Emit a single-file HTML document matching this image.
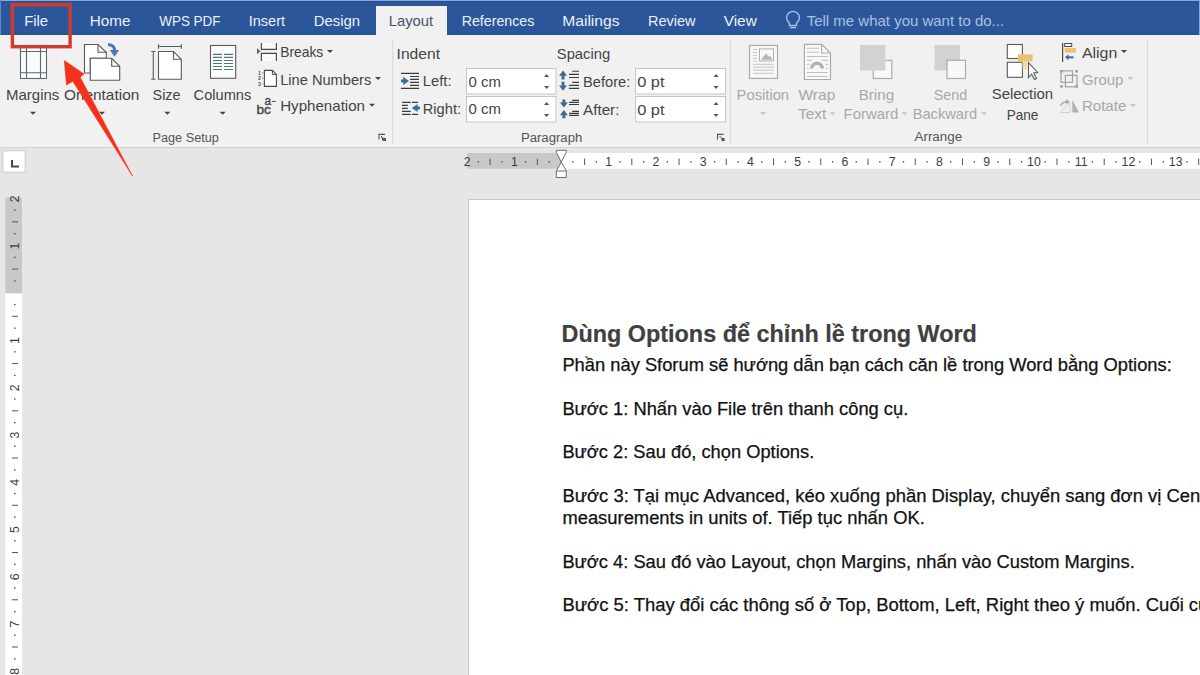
<!DOCTYPE html>
<html><head><meta charset="utf-8"><title>Word Layout</title>
<style>
html,body{margin:0;padding:0;width:1200px;height:675px;overflow:hidden;background:#e6e6e6;}
svg{display:block;font-family:"Liberation Sans",sans-serif;}
</style></head><body>
<svg width="1200" height="675" viewBox="0 0 1200 675">
<rect x="0" y="0" width="1200" height="675" fill="#e6e6e6"/>
<rect x="0" y="0" width="1200" height="35" fill="#2b579a"/>
<rect x="0" y="0" width="1200" height="1.2" fill="#85a8dc"/>
<rect x="0" y="1.2" width="1200" height="1" fill="#274f8f"/>
<rect x="0" y="34" width="1200" height="1" fill="#27508f"/>
<rect x="1199" y="0" width="1" height="35" fill="#85a8dc"/>
<rect x="0" y="0" width="1" height="35" fill="#5f86c4"/>
<rect x="0" y="35" width="1200" height="112" fill="#f1f1f1"/>
<rect x="0" y="147" width="1200" height="1" fill="#d4d4d4"/>
<rect x="376" y="6" width="71" height="30" fill="#f1f1f1"/>
<text x="24.20" y="26.20" font-size="14.8" fill="#e9f0f9" textLength="23.90" lengthAdjust="spacingAndGlyphs">File</text>
<text x="89.70" y="26.20" font-size="14.8" fill="#e9f0f9" textLength="40.88" lengthAdjust="spacingAndGlyphs">Home</text>
<text x="159.20" y="26.20" font-size="14.8" fill="#e9f0f9" textLength="61.38" lengthAdjust="spacingAndGlyphs">WPS PDF</text>
<text x="248.70" y="26.20" font-size="14.8" fill="#e9f0f9" textLength="36.41" lengthAdjust="spacingAndGlyphs">Insert</text>
<text x="313.70" y="26.20" font-size="14.8" fill="#e9f0f9" textLength="46.42" lengthAdjust="spacingAndGlyphs">Design</text>
<text x="461.70" y="26.20" font-size="14.8" fill="#e9f0f9" textLength="72.64" lengthAdjust="spacingAndGlyphs">References</text>
<text x="562.20" y="26.20" font-size="14.8" fill="#e9f0f9" textLength="57.39" lengthAdjust="spacingAndGlyphs">Mailings</text>
<text x="647.95" y="26.20" font-size="14.8" fill="#e9f0f9" textLength="47.58" lengthAdjust="spacingAndGlyphs">Review</text>
<text x="723.70" y="26.20" font-size="14.8" fill="#e9f0f9" textLength="33.11" lengthAdjust="spacingAndGlyphs">View</text>
<text x="388.70" y="26.20" font-size="14.8" fill="#46546a" textLength="44.39" lengthAdjust="spacingAndGlyphs">Layout</text>
<g fill="none" stroke="#a9c0e4" stroke-width="1.4"><path d="M789.5 23.5 C787.5 21.5 786.6 19.8 786.6 17.8 A6.4 6.4 0 0 1 799.4 17.8 C799.4 19.8 798.5 21.5 796.5 23.5 L796.5 25.5 L789.5 25.5 Z"/><path d="M790 27.6 H796"/></g>
<text x="806.70" y="26.20" font-size="14.8" fill="#a9c0e4" textLength="197.42" lengthAdjust="spacingAndGlyphs">Tell me what you want to do...</text>
<text x="6.00" y="99.60" font-size="14.8" fill="#444444" textLength="53.29" lengthAdjust="spacingAndGlyphs">Margins</text>
<text x="63.90" y="99.60" font-size="14.8" fill="#444444" textLength="75.40" lengthAdjust="spacingAndGlyphs">Orientation</text>
<text x="152.50" y="99.60" font-size="14.8" fill="#444444" textLength="28.09" lengthAdjust="spacingAndGlyphs">Size</text>
<text x="193.60" y="99.60" font-size="14.8" fill="#444444" textLength="57.70" lengthAdjust="spacingAndGlyphs">Columns</text>
<path d="M30.00 111.80 H36.00 L33.00 114.80 Z" fill="#444444"/>
<path d="M99.00 111.80 H105.00 L102.00 114.80 Z" fill="#444444"/>
<path d="M164.30 111.80 H170.30 L167.30 114.80 Z" fill="#444444"/>
<path d="M219.70 111.80 H225.70 L222.70 114.80 Z" fill="#444444"/>
<text x="280.20" y="57.30" font-size="14.8" fill="#444444" textLength="43.11" lengthAdjust="spacingAndGlyphs">Breaks</text>
<text x="280.20" y="84.70" font-size="14.8" fill="#444444" textLength="91.08" lengthAdjust="spacingAndGlyphs">Line Numbers</text>
<text x="280.20" y="111.30" font-size="14.8" fill="#444444" textLength="84.81" lengthAdjust="spacingAndGlyphs">Hyphenation</text>
<path d="M327.00 50.00 H333.00 L330.00 53.00 Z" fill="#444444"/>
<path d="M375.00 77.00 H381.00 L378.00 80.00 Z" fill="#444444"/>
<path d="M369.00 103.70 H375.00 L372.00 106.70 Z" fill="#444444"/>
<text x="152.50" y="141.70" font-size="12.5" fill="#555555" textLength="66.38" lengthAdjust="spacingAndGlyphs">Page Setup</text>
<rect x="392.2" y="40" width="1" height="104" fill="#d8d8d8"/>
<rect x="729.9" y="40" width="1" height="104" fill="#d8d8d8"/>
<rect x="1146.8" y="40" width="1" height="104" fill="#d8d8d8"/>
<text x="396.60" y="58.70" font-size="14.8" fill="#444444" textLength="43.40" lengthAdjust="spacingAndGlyphs">Indent</text>
<text x="556.80" y="58.50" font-size="14.8" fill="#444444" textLength="53.39" lengthAdjust="spacingAndGlyphs">Spacing</text>
<text x="422.80" y="86.30" font-size="14.8" fill="#444444" textLength="28.70" lengthAdjust="spacingAndGlyphs">Left:</text>
<text x="422.80" y="113.90" font-size="14.8" fill="#444444" textLength="38.21" lengthAdjust="spacingAndGlyphs">Right:</text>
<text x="583.00" y="86.70" font-size="14.8" fill="#444444" textLength="47.32" lengthAdjust="spacingAndGlyphs">Before:</text>
<text x="583.00" y="114.50" font-size="14.8" fill="#444444" textLength="36.42" lengthAdjust="spacingAndGlyphs">After:</text>
<rect x="466.5" y="68.5" width="89.5" height="25.5" fill="#ffffff" stroke="#c6c6c6" stroke-width="1"/>
<rect x="466.5" y="96.5" width="89.5" height="25.5" fill="#ffffff" stroke="#c6c6c6" stroke-width="1"/>
<rect x="635.5" y="68.5" width="90" height="25.5" fill="#ffffff" stroke="#c6c6c6" stroke-width="1"/>
<rect x="635.5" y="96.5" width="90" height="25.5" fill="#ffffff" stroke="#c6c6c6" stroke-width="1"/>
<text x="468.50" y="86.50" font-size="14.8" fill="#444444" textLength="32.42" lengthAdjust="spacingAndGlyphs">0 cm</text>
<text x="468.50" y="114.00" font-size="14.8" fill="#444444" textLength="32.42" lengthAdjust="spacingAndGlyphs">0 cm</text>
<text x="637.20" y="86.70" font-size="14.8" fill="#444444" textLength="27.38" lengthAdjust="spacingAndGlyphs">0 pt</text>
<text x="637.20" y="114.50" font-size="14.8" fill="#444444" textLength="27.38" lengthAdjust="spacingAndGlyphs">0 pt</text>
<text x="520.90" y="141.50" font-size="12.5" fill="#555555" textLength="61.42" lengthAdjust="spacingAndGlyphs">Paragraph</text>
<text x="736.60" y="99.50" font-size="14.8" fill="#a8a8a8" textLength="52.50" lengthAdjust="spacingAndGlyphs">Position</text>
<text x="798.50" y="99.50" font-size="14.8" fill="#a8a8a8" textLength="36.79" lengthAdjust="spacingAndGlyphs">Wrap</text>
<text x="797.90" y="119.30" font-size="14.8" fill="#a8a8a8" textLength="28.39" lengthAdjust="spacingAndGlyphs">Text</text>
<text x="858.70" y="99.50" font-size="14.8" fill="#a8a8a8" textLength="35.40" lengthAdjust="spacingAndGlyphs">Bring</text>
<text x="843.60" y="119.30" font-size="14.8" fill="#a8a8a8" textLength="54.78" lengthAdjust="spacingAndGlyphs">Forward</text>
<text x="933.70" y="99.50" font-size="14.8" fill="#a8a8a8" textLength="33.42" lengthAdjust="spacingAndGlyphs">Send</text>
<text x="912.70" y="119.30" font-size="14.8" fill="#a8a8a8" textLength="64.38" lengthAdjust="spacingAndGlyphs">Backward</text>
<path d="M760.00 112.00 H766.00 L763.00 115.00 Z" fill="#c4c4c4"/>
<path d="M829.50 112.20 H835.50 L832.50 115.20 Z" fill="#c4c4c4"/>
<path d="M901.50 112.20 H907.50 L904.50 115.20 Z" fill="#c4c4c4"/>
<path d="M981.00 112.20 H987.00 L984.00 115.20 Z" fill="#c4c4c4"/>
<text x="914.50" y="141.40" font-size="12.5" fill="#555555" textLength="47.62" lengthAdjust="spacingAndGlyphs">Arrange</text>
<text x="991.70" y="99.30" font-size="14.8" fill="#444444" textLength="61.39" lengthAdjust="spacingAndGlyphs">Selection</text>
<text x="1006.70" y="119.50" font-size="14.8" fill="#444444" textLength="31.71" lengthAdjust="spacingAndGlyphs">Pane</text>
<text x="1081.90" y="57.60" font-size="14.8" fill="#444444" textLength="35.41" lengthAdjust="spacingAndGlyphs">Align</text>
<text x="1081.90" y="84.60" font-size="14.8" fill="#a8a8a8" textLength="41.38" lengthAdjust="spacingAndGlyphs">Group</text>
<text x="1081.90" y="111.20" font-size="14.8" fill="#a8a8a8" textLength="44.41" lengthAdjust="spacingAndGlyphs">Rotate</text>
<path d="M1121.00 50.10 H1127.00 L1124.00 53.10 Z" fill="#444444"/>
<path d="M1127.50 77.00 H1133.50 L1130.50 80.00 Z" fill="#c4c4c4"/>
<path d="M1130.00 103.90 H1136.00 L1133.00 106.90 Z" fill="#c4c4c4"/>
<rect x="2.5" y="150.5" width="23" height="22" fill="#ffffff" stroke="#d9d9d9" stroke-width="2"/>
<path d="M12 160 V166.5 H19" fill="none" stroke="#4a4a4a" stroke-width="2"/>
<rect x="467" y="153" width="94" height="15.7" fill="#c8c8c8"/>
<rect x="561" y="153" width="639" height="15.7" fill="#ffffff"/>
<text x="467.07" y="165.9" font-size="12.3" fill="#3c3c3c" text-anchor="middle">2</text>
<rect x="477.68" y="161" width="1.3" height="1.6" fill="#555"/>
<rect x="489.59" y="158.6" width="1" height="6.4" fill="#555"/>
<rect x="501.30" y="161" width="1.3" height="1.6" fill="#555"/>
<text x="514.31" y="165.9" font-size="12.3" fill="#3c3c3c" text-anchor="middle">1</text>
<rect x="524.92" y="161" width="1.3" height="1.6" fill="#555"/>
<rect x="536.83" y="158.6" width="1" height="6.4" fill="#555"/>
<rect x="548.54" y="161" width="1.3" height="1.6" fill="#555"/>
<rect x="572.16" y="161" width="1.3" height="1.6" fill="#555"/>
<rect x="584.07" y="158.6" width="1" height="6.4" fill="#555"/>
<rect x="595.78" y="161" width="1.3" height="1.6" fill="#555"/>
<text x="608.79" y="165.9" font-size="12.3" fill="#3c3c3c" text-anchor="middle">1</text>
<rect x="619.40" y="161" width="1.3" height="1.6" fill="#555"/>
<rect x="631.31" y="158.6" width="1" height="6.4" fill="#555"/>
<rect x="643.02" y="161" width="1.3" height="1.6" fill="#555"/>
<text x="656.03" y="165.9" font-size="12.3" fill="#3c3c3c" text-anchor="middle">2</text>
<rect x="666.64" y="161" width="1.3" height="1.6" fill="#555"/>
<rect x="678.55" y="158.6" width="1" height="6.4" fill="#555"/>
<rect x="690.26" y="161" width="1.3" height="1.6" fill="#555"/>
<text x="703.27" y="165.9" font-size="12.3" fill="#3c3c3c" text-anchor="middle">3</text>
<rect x="713.88" y="161" width="1.3" height="1.6" fill="#555"/>
<rect x="725.79" y="158.6" width="1" height="6.4" fill="#555"/>
<rect x="737.50" y="161" width="1.3" height="1.6" fill="#555"/>
<text x="750.51" y="165.9" font-size="12.3" fill="#3c3c3c" text-anchor="middle">4</text>
<rect x="761.12" y="161" width="1.3" height="1.6" fill="#555"/>
<rect x="773.03" y="158.6" width="1" height="6.4" fill="#555"/>
<rect x="784.74" y="161" width="1.3" height="1.6" fill="#555"/>
<text x="797.75" y="165.9" font-size="12.3" fill="#3c3c3c" text-anchor="middle">5</text>
<rect x="808.36" y="161" width="1.3" height="1.6" fill="#555"/>
<rect x="820.27" y="158.6" width="1" height="6.4" fill="#555"/>
<rect x="831.98" y="161" width="1.3" height="1.6" fill="#555"/>
<text x="844.99" y="165.9" font-size="12.3" fill="#3c3c3c" text-anchor="middle">6</text>
<rect x="855.60" y="161" width="1.3" height="1.6" fill="#555"/>
<rect x="867.51" y="158.6" width="1" height="6.4" fill="#555"/>
<rect x="879.22" y="161" width="1.3" height="1.6" fill="#555"/>
<text x="892.23" y="165.9" font-size="12.3" fill="#3c3c3c" text-anchor="middle">7</text>
<rect x="902.84" y="161" width="1.3" height="1.6" fill="#555"/>
<rect x="914.75" y="158.6" width="1" height="6.4" fill="#555"/>
<rect x="926.46" y="161" width="1.3" height="1.6" fill="#555"/>
<text x="939.47" y="165.9" font-size="12.3" fill="#3c3c3c" text-anchor="middle">8</text>
<rect x="950.08" y="161" width="1.3" height="1.6" fill="#555"/>
<rect x="961.99" y="158.6" width="1" height="6.4" fill="#555"/>
<rect x="973.70" y="161" width="1.3" height="1.6" fill="#555"/>
<text x="986.71" y="165.9" font-size="12.3" fill="#3c3c3c" text-anchor="middle">9</text>
<rect x="997.32" y="161" width="1.3" height="1.6" fill="#555"/>
<rect x="1009.23" y="158.6" width="1" height="6.4" fill="#555"/>
<rect x="1020.94" y="161" width="1.3" height="1.6" fill="#555"/>
<text x="1033.95" y="165.9" font-size="12.3" fill="#3c3c3c" text-anchor="middle">10</text>
<rect x="1044.56" y="161" width="1.3" height="1.6" fill="#555"/>
<rect x="1056.47" y="158.6" width="1" height="6.4" fill="#555"/>
<rect x="1068.18" y="161" width="1.3" height="1.6" fill="#555"/>
<text x="1081.19" y="165.9" font-size="12.3" fill="#3c3c3c" text-anchor="middle">11</text>
<rect x="1091.80" y="161" width="1.3" height="1.6" fill="#555"/>
<rect x="1103.71" y="158.6" width="1" height="6.4" fill="#555"/>
<rect x="1115.42" y="161" width="1.3" height="1.6" fill="#555"/>
<text x="1128.43" y="165.9" font-size="12.3" fill="#3c3c3c" text-anchor="middle">12</text>
<rect x="1139.04" y="161" width="1.3" height="1.6" fill="#555"/>
<rect x="1150.95" y="158.6" width="1" height="6.4" fill="#555"/>
<rect x="1162.66" y="161" width="1.3" height="1.6" fill="#555"/>
<text x="1175.67" y="165.9" font-size="12.3" fill="#3c3c3c" text-anchor="middle">13</text>
<rect x="1186.28" y="161" width="1.3" height="1.6" fill="#555"/>
<rect x="1198.19" y="158.6" width="1" height="6.4" fill="#555"/>
<rect x="1209.90" y="161" width="1.3" height="1.6" fill="#555"/>
<text x="1222.91" y="165.9" font-size="12.3" fill="#3c3c3c" text-anchor="middle">14</text>
<rect x="1233.52" y="161" width="1.3" height="1.6" fill="#555"/>
<rect x="1245.43" y="158.6" width="1" height="6.4" fill="#555"/>
<rect x="1257.14" y="161" width="1.3" height="1.6" fill="#555"/>
<path d="M556.3 150.3 H566.3 V152.3 L561.3 162 L556.3 152.3 Z M561.3 162 L566.3 171 V177.5 H556.3 V171 Z M556.3 171 H566.3" fill="#ffffff" stroke="#6f6f6f" stroke-width="1"/>
<rect x="5.3" y="197.5" width="16.7" height="96" fill="#c8c8c8"/>
<rect x="5.3" y="293.5" width="16.7" height="382" fill="#ffffff"/>
<g transform="translate(19.3 198.82) rotate(-90)"><text x="0" y="0" font-size="12.3" fill="#3c3c3c" text-anchor="middle">2</text></g>
<rect x="14" y="209.43" width="1.6" height="1.3" fill="#555"/>
<rect x="12" y="221.34" width="6" height="1" fill="#555"/>
<rect x="14" y="233.05" width="1.6" height="1.3" fill="#555"/>
<g transform="translate(19.3 246.06) rotate(-90)"><text x="0" y="0" font-size="12.3" fill="#3c3c3c" text-anchor="middle">1</text></g>
<rect x="14" y="256.67" width="1.6" height="1.3" fill="#555"/>
<rect x="12" y="268.58" width="6" height="1" fill="#555"/>
<rect x="14" y="280.29" width="1.6" height="1.3" fill="#555"/>
<rect x="14" y="303.91" width="1.6" height="1.3" fill="#555"/>
<rect x="12" y="315.82" width="6" height="1" fill="#555"/>
<rect x="14" y="327.53" width="1.6" height="1.3" fill="#555"/>
<g transform="translate(19.3 340.54) rotate(-90)"><text x="0" y="0" font-size="12.3" fill="#3c3c3c" text-anchor="middle">1</text></g>
<rect x="14" y="351.15" width="1.6" height="1.3" fill="#555"/>
<rect x="12" y="363.06" width="6" height="1" fill="#555"/>
<rect x="14" y="374.77" width="1.6" height="1.3" fill="#555"/>
<g transform="translate(19.3 387.78) rotate(-90)"><text x="0" y="0" font-size="12.3" fill="#3c3c3c" text-anchor="middle">2</text></g>
<rect x="14" y="398.39" width="1.6" height="1.3" fill="#555"/>
<rect x="12" y="410.30" width="6" height="1" fill="#555"/>
<rect x="14" y="422.01" width="1.6" height="1.3" fill="#555"/>
<g transform="translate(19.3 435.02) rotate(-90)"><text x="0" y="0" font-size="12.3" fill="#3c3c3c" text-anchor="middle">3</text></g>
<rect x="14" y="445.63" width="1.6" height="1.3" fill="#555"/>
<rect x="12" y="457.54" width="6" height="1" fill="#555"/>
<rect x="14" y="469.25" width="1.6" height="1.3" fill="#555"/>
<g transform="translate(19.3 482.26) rotate(-90)"><text x="0" y="0" font-size="12.3" fill="#3c3c3c" text-anchor="middle">4</text></g>
<rect x="14" y="492.87" width="1.6" height="1.3" fill="#555"/>
<rect x="12" y="504.78" width="6" height="1" fill="#555"/>
<rect x="14" y="516.49" width="1.6" height="1.3" fill="#555"/>
<g transform="translate(19.3 529.50) rotate(-90)"><text x="0" y="0" font-size="12.3" fill="#3c3c3c" text-anchor="middle">5</text></g>
<rect x="14" y="540.11" width="1.6" height="1.3" fill="#555"/>
<rect x="12" y="552.02" width="6" height="1" fill="#555"/>
<rect x="14" y="563.73" width="1.6" height="1.3" fill="#555"/>
<g transform="translate(19.3 576.74) rotate(-90)"><text x="0" y="0" font-size="12.3" fill="#3c3c3c" text-anchor="middle">6</text></g>
<rect x="14" y="587.35" width="1.6" height="1.3" fill="#555"/>
<rect x="12" y="599.26" width="6" height="1" fill="#555"/>
<rect x="14" y="610.97" width="1.6" height="1.3" fill="#555"/>
<g transform="translate(19.3 623.98) rotate(-90)"><text x="0" y="0" font-size="12.3" fill="#3c3c3c" text-anchor="middle">7</text></g>
<rect x="14" y="634.59" width="1.6" height="1.3" fill="#555"/>
<rect x="12" y="646.50" width="6" height="1" fill="#555"/>
<rect x="14" y="658.21" width="1.6" height="1.3" fill="#555"/>
<g transform="translate(19.3 671.22) rotate(-90)"><text x="0" y="0" font-size="12.3" fill="#3c3c3c" text-anchor="middle">8</text></g>
<rect x="468.5" y="199.5" width="740" height="490" fill="#ffffff" stroke="#c8c8c8" stroke-width="1"/>
<text x="561.60" y="341.70" font-size="23.3" fill="#404040" font-weight="bold" textLength="415.21" lengthAdjust="spacingAndGlyphs" stroke="#404040" stroke-width="0.2">Dùng Options để chỉnh lề trong Word</text>
<text x="562.40" y="370.50" font-size="18.3" fill="#111111" textLength="609.41" lengthAdjust="spacingAndGlyphs" stroke="#111" stroke-width="0.25">Phần này Sforum sẽ hướng dẫn bạn cách căn lề trong Word bằng Options:</text>
<text x="562.40" y="414.60" font-size="18.3" fill="#111111" textLength="345.90" lengthAdjust="spacingAndGlyphs" stroke="#111" stroke-width="0.25">Bước 1: Nhấn vào File trên thanh công cụ.</text>
<text x="562.40" y="458.40" font-size="18.3" fill="#111111" stroke="#111" stroke-width="0.25">Bước 2: Sau đó, chọn Options.</text>
<text x="562.40" y="502.40" font-size="18.3" fill="#111111" textLength="703.35" lengthAdjust="spacingAndGlyphs" stroke="#111" stroke-width="0.25">Bước 3: Tại mục Advanced, kéo xuống phần Display, chuyển sang đơn vị Centimeters</text>
<text x="562.40" y="523.60" font-size="18.3" fill="#111111" textLength="362.40" lengthAdjust="spacingAndGlyphs" stroke="#111" stroke-width="0.25">measurements in units of. Tiếp tục nhấn OK.</text>
<text x="562.40" y="567.60" font-size="18.3" fill="#111111" textLength="572.38" lengthAdjust="spacingAndGlyphs" stroke="#111" stroke-width="0.25">Bước 4: Sau đó vào Layout, chọn Margins, nhấn vào Custom Margins.</text>
<text x="562.40" y="611.10" font-size="18.3" fill="#111111" textLength="749.53" lengthAdjust="spacingAndGlyphs" stroke="#111" stroke-width="0.25">Bước 5: Thay đổi các thông số ở Top, Bottom, Left, Right theo ý muốn. Cuối cùng nhấn OK.</text>
<!-- Margins -->
<g stroke="#5b686c" stroke-width="1.1" fill="none">
<rect x="20.5" y="45.5" width="26" height="33" fill="#f7fbfb"/>
<path d="M26.5 45.5 V78.5 M40.5 45.5 V78.5 M20.5 51.5 H46.5 M20.5 72.7 H46.5"/>
</g>
<!-- Orientation -->
<g stroke="#5a5a5a" stroke-width="1.1" fill="#ffffff">
<path d="M84.5 73 V44.5 H98 L106.3 52.3 V58.3 H90.3 V73 Z"/>
<path d="M98 44.5 V52.3 H106.3" fill="none"/>
<path d="M90.3 58.3 H111.7 L119.7 66.3 V80.3 H90.3 Z"/>
<path d="M111.7 58.3 V66.3 H119.7" fill="none"/>
</g>
<path d="M108 44.5 C112.8 44.6 115 47.5 114.6 51.5" fill="none" stroke="#4a7aae" stroke-width="3.2"/>
<path d="M109.8 50 L119.2 50 L114.5 56.8 Z" fill="#4a7aae"/>
<!-- Size -->
<g stroke="#4f5c66" stroke-width="1.1" fill="none">
<path d="M158.5 46.5 H181.3 M158.5 44.2 V48.8 M181.3 44.2 V48.8"/>
<path d="M153.3 51.5 V79.3 M151.2 51.5 H155.5 M151.2 79.3 H155.5"/>
</g>
<g stroke="#5a5a5a" stroke-width="1.1" fill="#ffffff">
<path d="M158.5 51.5 H173.5 L181.3 59.3 V79.3 H158.5 Z"/>
<path d="M173.5 51.5 V59.3 H181.3" fill="none"/>
</g>
<!-- Columns -->
<rect x="210.5" y="45.5" width="25.2" height="32.8" fill="#fdfdfd" stroke="#5a5a5a" stroke-width="1.1"/>
<g stroke="#4f7878" stroke-width="1.2">
<path d="M212.9 54.3 H222 M224 54.3 H233 M212.9 57.4 H222 M224 57.4 H233 M212.9 60.5 H222 M224 60.5 H233 M212.9 63.5 H222 M224 63.5 H233 M212.9 66.5 H222 M224 66.5 H233 M212.9 69.5 H222 M224 69.5 H233"/>
</g>
<!-- Breaks -->
<rect x="261.4" y="43" width="15" height="6.4" fill="#fbfbfb"/>
<rect x="261.4" y="53.3" width="15" height="7.7" fill="#fbfbfb"/>
<path d="M261.4 43 V49.4 H276.4 V43 M261.4 61 V53.3 H276.4 V61" fill="none" stroke="#4a4a4a" stroke-width="1.2"/>
<path d="M257 48.3 L260.5 51.3 L257 54.3 Z" fill="#50667a"/>
<!-- Line numbers -->
<path d="M264.4 86.4 V70.4 H272.4 L276.4 74.4 V86.4 Z" fill="#ffffff" stroke="#4a4a4a" stroke-width="1.1"/>
<path d="M272.4 70.4 V74.4 H276.4" fill="none" stroke="#4a4a4a" stroke-width="1"/>
<g font-size="5.2" fill="#505050" font-weight="bold"><text x="258" y="74.5">1</text><text x="258" y="80">2</text><text x="258" y="85.5">3</text></g>
<g fill="#666"><rect x="262.3" y="72.3" width="1" height="1"/><rect x="262.3" y="77.8" width="1" height="1"/><rect x="262.3" y="83.3" width="1" height="1"/></g>
<!-- Hyphenation -->
<text x="256.4" y="113.5" font-size="13" fill="#4a4a4a" stroke="#4a4a4a" stroke-width="0.45" textLength="14.4" lengthAdjust="spacingAndGlyphs">bc</text>
<text x="264.6" y="104.8" font-size="12.6" fill="#4a4a4a" stroke="#4a4a4a" stroke-width="0.4" textLength="6.6" lengthAdjust="spacingAndGlyphs">a</text>
<rect x="272" y="100.9" width="3.7" height="1.1" fill="#555"/>
<!-- launchers -->
<g fill="none" stroke="#555" stroke-width="1.1"><path d="M379 139.4 V134.4 H385"/><path d="M717.5 139.4 V134.4 H723.5"/></g>
<g fill="#555"><path d="M381 136 L386 141 L386 137.5 L382.5 141 Z"/><rect x="383" y="138" width="3" height="3"/><rect x="721.5" y="138" width="3" height="3"/><path d="M719.5 136 L724.5 141" stroke="#555" stroke-width="1"/><path d="M381 136 L386 141" stroke="#555" stroke-width="1"/></g>
<!-- Indent left -->
<g stroke="#3c3c3c" stroke-width="1.2">
<path d="M401 73.4 H419 M410.1 76.5 H419 M410.1 79.4 H419 M410.1 82.4 H419 M410.1 85.4 H419 M401 88.4 H419"/>
</g>
<path d="M401 80.9 H406" stroke="#3f6c99" stroke-width="2.8"/>
<path d="M403.2 76.8 L409 80.9 L403.2 85 Z" fill="#3f6c99"/>
<!-- Indent right -->
<g stroke="#3c3c3c" stroke-width="1.2">
<path d="M402 102.4 H410.7 M412 102.4 H418 M402 105.3 H407.8 M402 108.3 H407.8 M402 111.4 H410.7 M402 114.4 H410.7 M412 114.4 H418"/>
</g>
<path d="M414.5 108 H420" stroke="#3f6c99" stroke-width="2.8"/>
<path d="M417.6 103.9 L411.8 108 L417.6 112.1 Z" fill="#3f6c99"/>
<!-- Spacing before -->
<g fill="#3f6c8a">
<path d="M563 70.6 L567 75.8 H564.5 V79.6 H561.5 V75.8 H559 Z"/>
<path d="M563 90.8 L567 85.6 H564.5 V81.8 H561.5 V85.6 H559 Z"/>
<path d="M563.9 107.6 L567.9 102.4 H565.4 V99.6 H562.4 V102.4 H559.9 Z"/>
<path d="M563.9 110.1 L567.9 115.3 H565.4 V118.2 H562.4 V115.3 H559.9 Z"/>
</g>
<g stroke="#3c3c3c" stroke-width="1.1">
<path d="M572.2 71.3 H579 M569 74.4 H579 M569 77.5 H579 M572.2 82.4 H579 M569 85.4 H579 M569 88.4 H579"/>
<path d="M572.2 100.4 H579 M569 102.4 H579 M569 104.5 H579 M572.2 111.4 H579 M569 113.4 H579 M569 115.4 H579"/>
</g>
<!-- spinners -->
<g fill="#555">
<path d="M544 77 L546.6 74 L549.2 77 Z M544 86 L549.2 86 L546.6 89 Z"/>
<path d="M544 105 L546.6 102 L549.2 105 Z M544 114 L549.2 114 L546.6 117 Z"/>
<path d="M713.5 77 L716.1 74 L718.7 77 Z M713.5 86 L718.7 86 L716.1 89 Z"/>
<path d="M713.5 105 L716.1 102 L718.7 105 Z M713.5 114 L718.7 114 L716.1 117 Z"/>
</g>
<!-- Position -->
<rect x="749.5" y="45.4" width="28" height="33" fill="#f8f8f8" stroke="#ababab" stroke-width="1.2"/>
<rect x="759.5" y="48.9" width="14" height="12.1" fill="#f8f8f8" stroke="#b0b0b0" stroke-width="1"/>
<path d="M761 59.8 L766 53.5 L769 57 L770 55.8 L772.5 59.8 Z" fill="#b4b4b4"/>
<g stroke="#c6c6c6" stroke-width="1"><path d="M753 49.5 H757 M753 52.4 H757 M753 55.3 H757 M753 58.2 H757 M753 61 H757 M753 64.3 H774 M753 67.2 H774 M753 70.2 H774 M753 73.3 H774"/></g>
<!-- Wrap text -->
<path d="M804.4 79.5 V44.3 H821.6 L830.5 53 V79.5 Z" fill="#f8f8f8" stroke="#ababab" stroke-width="1.2"/>
<path d="M821.6 44.3 V53 H830.5" fill="none" stroke="#ababab" stroke-width="1.1"/>
<g stroke="#c0c0c0" stroke-width="1.1"><path d="M807 48.3 H819 M807 52.3 H819 M807 56.5 H828 M807 60.3 H812 M822 60.3 H828 M807 64.3 H810 M825 64.3 H828 M807 68.3 H809 M826 68.3 H828 M807 72.5 H828 M807 76.5 H828"/></g>
<path d="M810 68.5 A7 7 0 0 1 824 68.5 H820.5 A3.5 3.5 0 0 0 813.5 68.5 Z" fill="#b2b2b2"/>
<!-- Bring forward -->
<rect x="873.3" y="60.3" width="18.5" height="18.2" fill="#f8f8f8" stroke="#ababab" stroke-width="1.2"/>
<rect x="860" y="45" width="25.5" height="25.5" fill="#d2d2d2"/>
<!-- Send backward -->
<rect x="934.5" y="45" width="25.5" height="25.5" fill="#d2d2d2"/>
<rect x="947" y="60.3" width="18.5" height="18.2" fill="#f8f8f8" stroke="#ababab" stroke-width="1.2"/>
<!-- Selection pane -->
<rect x="1007.3" y="44.5" width="15.1" height="14" fill="#ffffff" stroke="#5a5a5a" stroke-width="1.1"/>
<rect x="1007.3" y="62.3" width="15.1" height="15" fill="#ffffff" stroke="#5a5a5a" stroke-width="1.1"/>
<rect x="1018" y="54.3" width="14.6" height="7" fill="#eec170"/>
<rect x="1022.5" y="61" width="4.5" height="8" fill="#f3d9a6"/>
<path d="M1028.5 62.6 V77.6 L1031.6 74.2 L1034.5 79.5 L1036.5 78.5 L1033.7 73 L1037.7 72.5 Z" fill="#ffffff" stroke="#5a5a5a" stroke-width="1.1" stroke-linejoin="miter"/>
<!-- Align -->
<rect x="1062" y="43" width="1.2" height="19" fill="#4a4a4a"/>
<rect x="1064.7" y="43.5" width="7" height="3" fill="#ffffff" stroke="#4a4a4a" stroke-width="1"/>
<rect x="1064.7" y="48" width="11.2" height="4.7" fill="#eec170"/>
<path d="M1068 57.3 H1073.5" stroke="#3f6c99" stroke-width="2"/>
<path d="M1068.5 54.3 L1065 57.3 L1068.5 60.3 Z" fill="#3f6c99"/>
<!-- Group -->
<g fill="none" stroke="#a2a2a2" stroke-width="1.2"><rect x="1061" y="70.9" width="11.5" height="11.4"/><rect x="1065.4" y="75.4" width="11.6" height="11.4"/></g>
<g fill="#a0a0a0"><rect x="1060.2" y="70" width="2.7" height="2.5"/><rect x="1075.2" y="70" width="2.7" height="2.5"/><rect x="1060.2" y="85.2" width="2.7" height="2.5"/><rect x="1075.2" y="85.2" width="2.7" height="2.5"/></g>
<!-- Rotate -->
<path d="M1061 106 C1061 102.5 1063.5 101.8 1067 101.8" fill="none" stroke="#a4a4a4" stroke-width="1.3"/>
<path d="M1066.2 99.2 L1069.8 101.8 L1066.2 104.4 Z" fill="#a4a4a4"/>
<path d="M1060 112.5 L1070 103 V112.5 Z" fill="none" stroke="#d0d0d0" stroke-width="1"/>
<path d="M1072.3 112.5 V100 L1079 112.5 Z" fill="#b0b0b0"/>
<!-- red box -->
<rect x="12.4" y="4.7" width="57.7" height="42" fill="none" stroke="#d33a2c" stroke-width="3.4"/>
<!-- red arrow -->
<path d="M64.3 60.6 L84 73.9 L80.2 77.2 L132.5 176 L72.8 81.3 L66.5 85 Z" fill="#f4311b" stroke="#f4311b" stroke-width="0.6" stroke-linejoin="round"/>

</svg>
</body></html>
